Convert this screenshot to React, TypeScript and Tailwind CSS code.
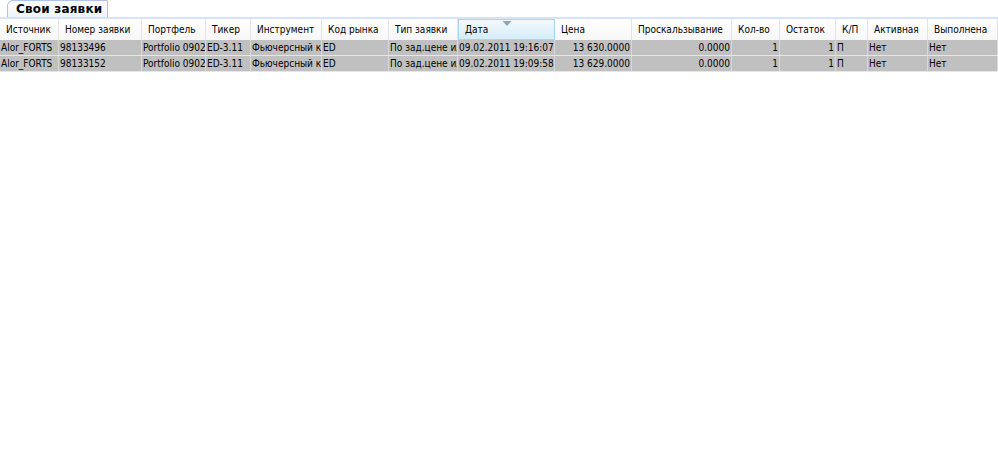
import React from 'react'

type Col = { title: string; w: number; align?: 'right' }

const cols: Col[] = [
  { title: 'Источник', w: 59 },
  { title: 'Номер заявки', w: 83 },
  { title: 'Портфель', w: 64 },
  { title: 'Тикер', w: 45 },
  { title: 'Инструмент', w: 71 },
  { title: 'Код рынка', w: 67 },
  { title: 'Тип заявки', w: 69 },
  { title: 'Дата', w: 97 },
  { title: 'Цена', w: 77, align: 'right' },
  { title: 'Проскальзывание', w: 100, align: 'right' },
  { title: 'Кол-во', w: 48, align: 'right' },
  { title: 'Остаток', w: 56, align: 'right' },
  { title: 'К/П', w: 32 },
  { title: 'Активная', w: 60 },
  { title: 'Выполнена', w: 70 },
]

const rows = [
  ['Alor_FORTS', '98133496', 'Portfolio 0902', 'ED-3.11', 'Фьючерсный контракт', 'ED', 'По зад.цене или лучше', '09.02.2011 19:16:07', '13 630.0000', '0.0000', '1', '1', 'П', 'Нет', 'Нет'],
  ['Alor_FORTS', '98133152', 'Portfolio 0902', 'ED-3.11', 'Фьючерсный контракт', 'ED', 'По зад.цене или лучше', '09.02.2011 19:09:58', '13 629.0000', '0.0000', '1', '1', 'П', 'Нет', 'Нет'],
]

export default function App() {
  return (
    <div className="w-[998px] h-[460px] bg-white overflow-hidden text-[10px] text-black" style={{ fontFamily: '"DejaVu Sans Condensed", "Liberation Sans", sans-serif' }}>
      {/* Tab strip */}
      <div className="h-[19px] flex items-end border-b-2 border-[#d6e4f5] pl-[7px]">
        <div className="h-[17px] pl-[8px] pr-[5px] flex items-center rounded-tl-[6px] rounded-tr-[2px] border border-b-0 border-[#a9c6ea] bg-gradient-to-b from-white to-[#eef4fc] text-[12px] font-bold tracking-[0.2px]" style={{ fontFamily: '"DejaVu Sans", sans-serif' }}>
          Свои заявки
        </div>
      </div>

      {/* Header */}
      <div className="flex h-[21px] bg-gradient-to-b from-white to-[#f7f7f7]">
        {cols.map((c, i) => (
          <div
            key={c.title}
            style={{ width: c.w }}
            className={
              'relative shrink-0 flex items-center pl-[6px] whitespace-nowrap overflow-hidden ' +
              (c.title === 'Дата'
                ? 'bg-gradient-to-b from-[#f2f9fd] to-[#d6ecf8] border border-[#a8d6f0]'
                : 'border-r border-[#e4e4e4]') +
              (i === cols.length - 1 ? ' grow' : '')
            }
          >
            {c.title === 'Дата' && (
              <svg className="absolute left-1/2 top-[1px] -translate-x-1/2" width="9" height="5" viewBox="0 0 9 5">
                <path d="M0 0 H9 L4.5 5 Z" fill="#8fa6b8" />
              </svg>
            )}
            {c.title}
          </div>
        ))}
      </div>

      {/* Rows */}
      {rows.map((r, ri) => (
        <div key={ri} className="flex h-[16px] bg-[#c0c0c0] border-b border-[#e6e6e6]">
          {r.map((v, ci) => (
            <div
              key={ci}
              style={{ width: cols[ci].w }}
              className={
                'shrink-0 flex items-center px-[1px] whitespace-nowrap overflow-hidden border-r border-[#d8d8d8] ' +
                (cols[ci].align === 'right' ? 'justify-end' : '') +
                (ci === cols.length - 1 ? ' grow' : '')
              }
            >
              {v}
            </div>
          ))}
        </div>
      ))}
    </div>
  )
}
